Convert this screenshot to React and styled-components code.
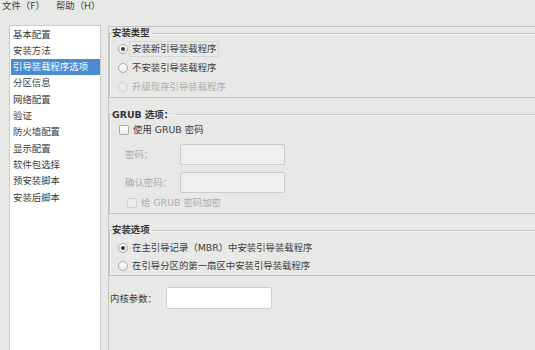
import React from 'react';
import styled, { createGlobalStyle } from 'styled-components';

const Global = createGlobalStyle`
  html, body { margin: 0; padding: 0; background: #e8e8e7; overflow: hidden; }
  body {
    font-family: "DejaVu Sans", "Noto Sans CJK SC", sans-serif;
    font-size: 9.4px;
    color: #3c3c3c;
  }
  * { box-sizing: border-box; }
`;

const Window = styled.div`
  width: 535px;
  height: 350px;
  display: flex;
  flex-direction: column;
  overflow: hidden;
`;

const MenuBar = styled.div`
  display: flex;
  height: 25px;
  padding-left: 2px;
  gap: 11px;
  line-height: 11px;
  align-items: flex-start;
`;

const MenuItem = styled.span`
  color: #3a3a3a;
`;

const Body = styled.div`
  flex: 1;
  display: flex;
  min-height: 0;
`;

const Sidebar = styled.ul`
  list-style: none;
  margin: 0 0 0 9px;
  padding: 0.5px 0 0 0;
  width: 92px;
  background: #ffffff;
  border: 1px solid #cacaca;
  border-bottom: none;
`;

const ListItem = styled.li`
  height: 16.33px;
  line-height: 16.33px;
  margin-left: 1px;
  padding-left: 2px;
  white-space: nowrap;
  background: ${p => (p.$selected ? '#4a8bd3' : 'transparent')};
  color: ${p => (p.$selected ? '#ffffff' : '#3a3a3a')};
`;

const Panel = styled.div`
  flex: 1;
  margin: 1px -30px 0 7px;
  border-top: 1px solid #c4c4c4;
  border-left: 1px solid #c4c4c4;
  display: flex;
  flex-direction: column;
`;

const Frame = styled.fieldset`
  margin: ${p => p.$top || 0}px 0 0 0;
  padding: 0;
  min-width: 0;
  border: 1px solid #c4c4c4;
  box-shadow: inset 1px 1px 0 #f5f5f4;
`;

const Legend = styled.legend`
  padding: 0 2px 0 0;
  margin-left: 2px;
  line-height: 12px;
  font-weight: 700;
  color: #333333;
`;

const FrameBody = styled.div`
  display: flex;
  flex-direction: column;
  padding: ${p => p.$pt || 0}px 0 0 8px;
`;

const OptionRow = styled.div`
  display: flex;
  align-items: center;
  height: ${p => p.$h || 19}px;
  padding-left: ${p => p.$indent || 0}px;
  margin-top: ${p => p.$mt || 0}px;
  color: ${p => (p.$disabled ? '#ababab' : '#3a3a3a')};
  white-space: nowrap;
`;

const Radio = styled.span`
  width: 10px;
  height: 10px;
  border-radius: 50%;
  border: 1px solid ${p => (p.$disabled ? '#d0d0d0' : '#a9a9a9')};
  background: ${p => (p.$disabled ? '#ececeb' : 'linear-gradient(#ffffff, #ececec)')};
  display: flex;
  align-items: center;
  justify-content: center;
  flex: none;
  &::after {
    content: '';
    width: 4px;
    height: 4px;
    border-radius: 50%;
    background: ${p => (p.$checked ? '#3a3a3a' : 'transparent')};
  }
`;

const Check = styled.span`
  width: 10px;
  height: 10px;
  margin-left: ${p => p.$ml || 0}px;
  border-radius: 2px;
  border: 1px solid ${p => (p.$disabled ? '#d0d0d0' : '#a9a9a9')};
  background: ${p => (p.$disabled ? '#ececeb' : 'linear-gradient(#ffffff, #ededed)')};
  flex: none;
`;

const OptionLabel = styled.span`
  margin-left: 1px;
  padding: 1px 2px;
  line-height: 12px;
  border: 1px ${p => (p.$focus ? 'solid #d6d6d4' : 'solid transparent')};
`;

const FieldRow = styled.div`
  display: flex;
  align-items: center;
  padding-left: ${p => p.$indent || 0}px;
  margin-top: ${p => p.$mt || 0}px;
`;

const FieldLabel = styled.span`
  width: ${p => p.$w}px;
  flex: none;
  color: ${p => (p.$disabled ? '#a8a8a8' : '#3a3a3a')};
  white-space: nowrap;
`;

const Input = styled.div`
  width: ${p => p.$w}px;
  height: ${p => p.$h}px;
  border: 1px solid ${p => (p.$disabled ? '#cbcbca' : '#cdcdcd')};
  border-radius: ${p => (p.$disabled ? 2 : 3)}px;
  background: ${p => (p.$disabled ? '#efefee' : '#ffffff')};
  flex: none;
`;

const navItems = [
  '基本配置',
  '安装方法',
  '引导装载程序选项',
  '分区信息',
  '网络配置',
  '验证',
  '防火墙配置',
  '显示配置',
  '软件包选择',
  '预安装脚本',
  '安装后脚本',
];

export default function App() {
  return (
    <Window>
      <Global />
      <MenuBar>
        <MenuItem>文件（F）</MenuItem>
        <MenuItem>帮助（H）</MenuItem>
      </MenuBar>
      <Body>
        <Sidebar>
          {navItems.map((t, i) => (
            <ListItem key={t} $selected={i === 2}>{t}</ListItem>
          ))}
        </Sidebar>
        <Panel>
          <Frame>
            <Legend>安装类型</Legend>
            <FrameBody $pt={0.5}>
              <OptionRow>
                <Radio $checked />
                <OptionLabel $focus>安装新引导装载程序</OptionLabel>
              </OptionRow>
              <OptionRow>
                <Radio />
                <OptionLabel>不安装引导装载程序</OptionLabel>
              </OptionRow>
              <OptionRow $disabled>
                <Radio $disabled />
                <OptionLabel>升级现存引导装载程序</OptionLabel>
              </OptionRow>
            </FrameBody>
          </Frame>

          <Frame $top={11}>
            <Legend>GRUB 选项：</Legend>
            <FrameBody>
              <OptionRow>
                <Check $ml={1} />
                <OptionLabel>使用 GRUB 密码</OptionLabel>
              </OptionRow>
              <FieldRow $indent={7} $mt={4}>
                <FieldLabel $w={55} $disabled>密码：</FieldLabel>
                <Input $w={105} $h={21} $disabled />
              </FieldRow>
              <FieldRow $indent={7} $mt={7}>
                <FieldLabel $w={55} $disabled>确认密码：</FieldLabel>
                <Input $w={105} $h={21} $disabled />
              </FieldRow>
              <OptionRow $indent={9} $mt={1} $disabled>
                <Check $disabled />
                <OptionLabel>给 GRUB 密码加密</OptionLabel>
              </OptionRow>
            </FrameBody>
          </Frame>

          <Frame $top={10.5}>
            <Legend>安装选项</Legend>
            <FrameBody $pt={3}>
              <OptionRow $h={18}>
                <Radio $checked />
                <OptionLabel>在主引导记录（MBR）中安装引导装载程序</OptionLabel>
              </OptionRow>
              <OptionRow $h={18}>
                <Radio />
                <OptionLabel>在引导分区的第一扇区中安装引导装载程序</OptionLabel>
              </OptionRow>
            </FrameBody>
          </Frame>

          <FieldRow $indent={1} $mt={11}>
            <FieldLabel $w={56}>内核参数：</FieldLabel>
            <Input $w={106} $h={22} />
          </FieldRow>
        </Panel>
      </Body>
    </Window>
  );
}
